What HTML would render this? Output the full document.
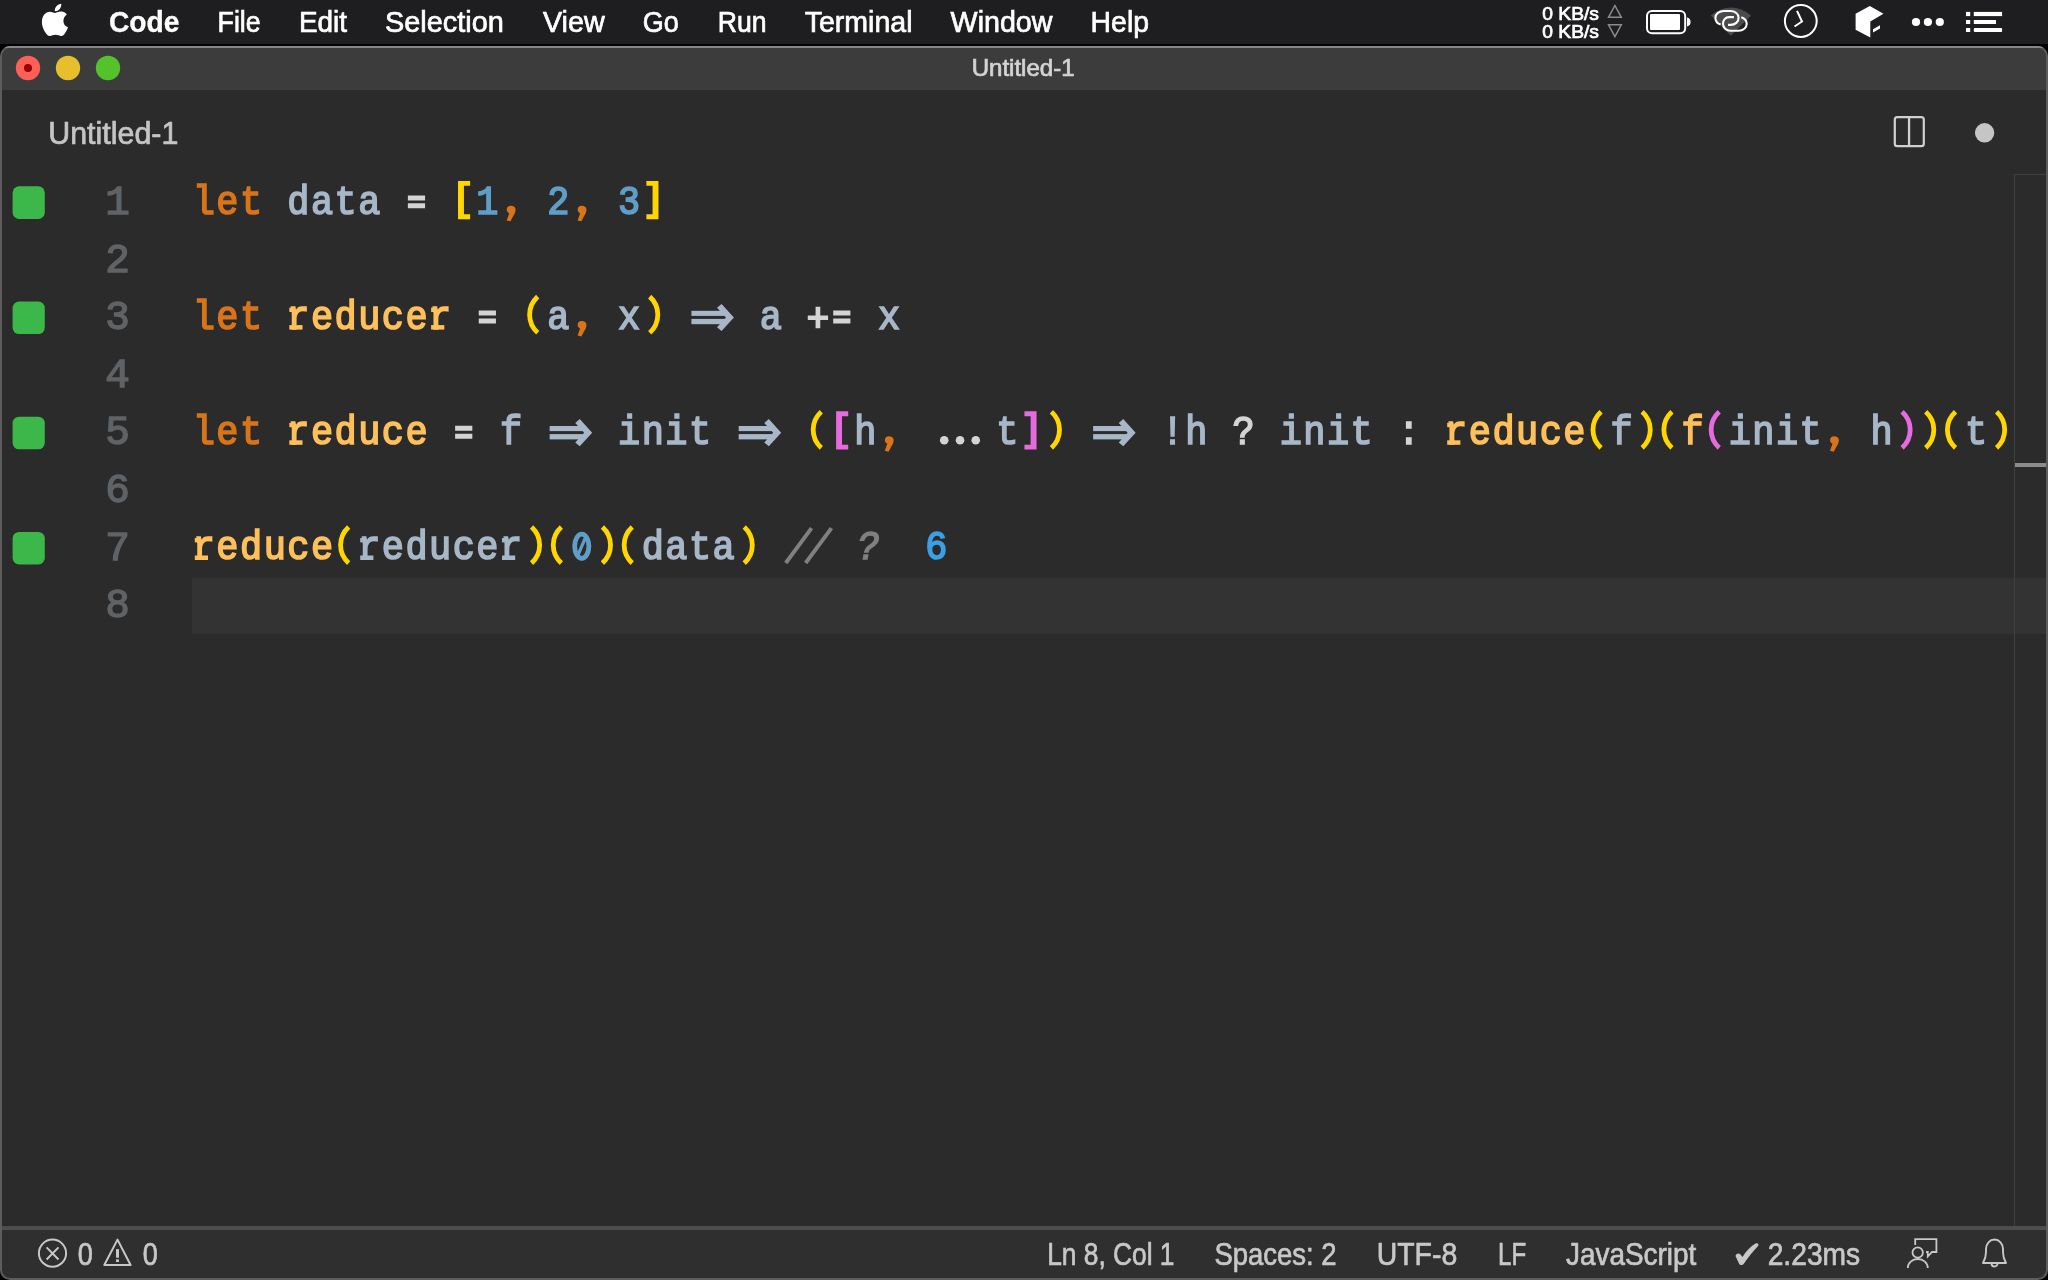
<!DOCTYPE html>
<html><head><meta charset="utf-8"><title>Untitled-1</title>
<style>
html,body{margin:0;padding:0;background:#000;width:2048px;height:1280px;overflow:hidden}
svg{display:block;position:absolute;left:0;top:0;will-change:transform}
.ui{font-family:"Liberation Sans",sans-serif}
.code text{font-family:"Liberation Mono",monospace;font-size:41.0px;stroke-width:1.7px}
.ln text{font-family:"Liberation Mono",monospace;font-size:41.0px;stroke:#606366;stroke-width:1.4px}
</style></head><body>
<svg width="2048" height="1280" viewBox="0 0 2048 1280">
<defs><symbol id="arrow" overflow="visible"><g fill="#a7b7c8">
<rect x="3.2" y="20.8" width="33.5" height="5.1"/>
<rect x="3.2" y="28.9" width="33.5" height="5.3"/>
<polygon points="33.3,13.9 45.7,27.5 33.3,41.1 28.8,37.3 37.7,27.5 28.8,17.7"/>
</g></symbol>
<symbol id="lp" overflow="visible"><path d="M14.9 6.6 C9.5 11.5 6.8 17.5 6.8 24.65 C6.8 31.8 9.5 37.8 14.9 42.7" fill="none" stroke-width="4.8"/></symbol>
<symbol id="rp" overflow="visible"><path d="M8.73 6.6 C14.13 11.5 16.83 17.5 16.83 24.65 C16.83 31.8 14.13 37.8 8.73 42.7" fill="none" stroke-width="4.8"/></symbol>
<symbol id="lb" overflow="visible"><path d="M6.1 6.1 H18.2 V11 H12 V39.5 H18.2 V44.4 H6.1 Z" stroke="none"/></symbol>
<symbol id="rb" overflow="visible"><path d="M17.5 6.1 H5.4 V11 H11.6 V39.5 H5.4 V44.4 H17.5 Z" stroke="none"/></symbol>
<symbol id="eq" overflow="visible"><path d="M3.2 20.6 H20.4 V25.6 H3.2 Z M3.2 28.5 H20.4 V33.5 H3.2 Z" stroke="none"/></symbol>
<symbol id="plus" overflow="visible"><path d="M1.4 25.4 H21.7 V30 H1.4 Z M9.2 16.8 H13.9 V38.3 H9.2 Z" stroke="none"/></symbol>
<symbol id="zero" overflow="visible"><ellipse cx="11.7" cy="25.8" rx="7.1" ry="12.1" fill="none" stroke-width="4.8"/><path d="M8.2 34 L15.2 17.6" fill="none" stroke-width="3.2"/></symbol>
<symbol id="comma" overflow="visible"><path d="M11.5 31 C14.5 31 16.4 32.6 16.4 35 C16.4 37 15.6 38.8 14.2 41 L11.3 46.5 L7.5 45.6 L10 38.6 C8.4 37.8 7.6 36.6 7.6 34.8 C7.6 32.6 9.2 31 11.5 31 Z" stroke="none"/></symbol>

<clipPath id="win"><rect x="0" y="46" width="2048" height="1234" rx="10"/></clipPath>
<clipPath id="inner"><rect x="2" y="48" width="2044" height="1230" rx="8"/></clipPath>
</defs>
<rect x="0" y="0" width="2048" height="1280" fill="#000"/>
<rect x="0" y="0" width="2048" height="44" fill="#1e1e20"/>
<g clip-path="url(#win)">
<rect x="0" y="46" width="2048" height="1234" fill="#5d5d5d"/>
<rect x="0" y="46" width="2048" height="2" fill="#858585"/>
<g clip-path="url(#inner)">
<rect x="2" y="48" width="2044" height="42" fill="#3c3c3c"/>
<rect x="2" y="90" width="2044" height="1136" fill="#2b2b2b"/>
<rect x="2" y="1226" width="2044" height="4" fill="#4d4d4d"/>
<rect x="2" y="1230" width="2044" height="48" fill="#2f2f2f"/>
</g></g>
<path d="M0 56 Q0 46 10 46" fill="none" stroke="#8a8a8a" stroke-width="0"/>
<rect x="192" y="578" width="1854" height="56" fill="#333333"/>
<rect x="2014" y="174" width="1" height="1052" fill="#404040"/>
<rect x="2014" y="174" width="32" height="1" fill="#404040"/>
<rect x="2015" y="463" width="31" height="4" fill="#8c8c8c"/>
<g class="ui">
<text x="108.90" y="32.00" font-size="29" fill="#ffffff" stroke="#ffffff" stroke-width="0.3" font-weight="bold" textLength="70.50" lengthAdjust="spacingAndGlyphs">Code</text>
<text x="217.60" y="32.00" font-size="29" fill="#ffffff" stroke="#ffffff" stroke-width="0.7" textLength="43.10" lengthAdjust="spacingAndGlyphs">File</text>
<text x="298.90" y="32.00" font-size="29" fill="#ffffff" stroke="#ffffff" stroke-width="0.7" textLength="48.10" lengthAdjust="spacingAndGlyphs">Edit</text>
<text x="385.00" y="32.00" font-size="29" fill="#ffffff" stroke="#ffffff" stroke-width="0.7" textLength="118.75" lengthAdjust="spacingAndGlyphs">Selection</text>
<text x="543.00" y="32.00" font-size="29" fill="#ffffff" stroke="#ffffff" stroke-width="0.7" textLength="61.70" lengthAdjust="spacingAndGlyphs">View</text>
<text x="642.80" y="32.00" font-size="29" fill="#ffffff" stroke="#ffffff" stroke-width="0.7" textLength="35.95" lengthAdjust="spacingAndGlyphs">Go</text>
<text x="717.80" y="32.00" font-size="29" fill="#ffffff" stroke="#ffffff" stroke-width="0.7" textLength="48.80" lengthAdjust="spacingAndGlyphs">Run</text>
<text x="804.70" y="32.00" font-size="29" fill="#ffffff" stroke="#ffffff" stroke-width="0.7" textLength="107.80" lengthAdjust="spacingAndGlyphs">Terminal</text>
<text x="950.60" y="32.00" font-size="29" fill="#ffffff" stroke="#ffffff" stroke-width="0.7" textLength="101.90" lengthAdjust="spacingAndGlyphs">Window</text>
<text x="1090.60" y="32.00" font-size="29" fill="#ffffff" stroke="#ffffff" stroke-width="0.7" textLength="58.40" lengthAdjust="spacingAndGlyphs">Help</text>
<text x="1542.30" y="19.80" font-size="17.8" fill="#ffffff" stroke="#ffffff" stroke-width="0.7" textLength="56.70" lengthAdjust="spacingAndGlyphs">0 KB/s</text>
<text x="1542.30" y="38.20" font-size="17.8" fill="#ffffff" stroke="#ffffff" stroke-width="0.7" textLength="56.70" lengthAdjust="spacingAndGlyphs">0 KB/s</text>
<text x="971.70" y="76.00" font-size="24" fill="#d4d4d4" stroke="#d4d4d4" stroke-width="0.7" textLength="102.90" lengthAdjust="spacingAndGlyphs">Untitled-1</text>
<text x="48.30" y="144.00" font-size="31" fill="#c5c5c5" stroke="#c5c5c5" stroke-width="0.7" textLength="130.00" lengthAdjust="spacingAndGlyphs">Untitled-1</text>
<text x="77.80" y="1264.50" font-size="31.5" fill="#c8c8c8" stroke="#c8c8c8" stroke-width="0.7" textLength="15.10" lengthAdjust="spacingAndGlyphs">0</text>
<text x="142.80" y="1264.50" font-size="31.5" fill="#c8c8c8" stroke="#c8c8c8" stroke-width="0.7" textLength="15.00" lengthAdjust="spacingAndGlyphs">0</text>
<text x="1047.20" y="1264.50" font-size="31.5" fill="#c8c8c8" stroke="#c8c8c8" stroke-width="0.7" textLength="127.30" lengthAdjust="spacingAndGlyphs">Ln 8, Col 1</text>
<text x="1214.40" y="1264.50" font-size="31.5" fill="#c8c8c8" stroke="#c8c8c8" stroke-width="0.7" textLength="122.20" lengthAdjust="spacingAndGlyphs">Spaces: 2</text>
<text x="1376.70" y="1264.50" font-size="31.5" fill="#c8c8c8" stroke="#c8c8c8" stroke-width="0.7" textLength="80.50" lengthAdjust="spacingAndGlyphs">UTF-8</text>
<text x="1498.00" y="1264.50" font-size="31.5" fill="#c8c8c8" stroke="#c8c8c8" stroke-width="0.7" textLength="28.10" lengthAdjust="spacingAndGlyphs">LF</text>
<text x="1566.00" y="1264.50" font-size="31.5" fill="#c8c8c8" stroke="#c8c8c8" stroke-width="0.7" textLength="130.30" lengthAdjust="spacingAndGlyphs">JavaScript</text>
<text x="1767.70" y="1264.50" font-size="31.5" fill="#c8c8c8" stroke="#c8c8c8" stroke-width="0.7" textLength="92.50" lengthAdjust="spacingAndGlyphs">2.23ms</text>
</g>

<!-- traffic lights -->
<circle cx="28" cy="68" r="12.2" fill="#fe5f57"/>
<circle cx="28" cy="68" r="4" fill="#990000"/>
<circle cx="68" cy="68" r="12.2" fill="#e7bf2c"/>
<circle cx="108" cy="68" r="12.2" fill="#53c22b"/>
<!-- apple -->
<path fill="#fff" d="M55.4 13 C57.5 12.2 59.5 11.6 61.5 11.6 C63.6 11.6 65.5 12.8 66.8 14.6 C64.7 15.9 63.4 18.2 63.4 21.1 C63.4 24.1 65.1 26.4 68 27.3 C67.3 29.5 66.1 31.8 64.8 33.5 C63.9 34.8 62.8 35.8 61.4 35.9 C59.6 36 58.3 34.8 55.6 34.8 C52.9 34.8 51.6 36 49.8 36 C48.1 36 46.9 34.6 45.9 33.2 C43.4 29.8 41.9 25.8 41.9 21.9 C41.9 15.9 45.5 11.7 49.9 11.7 C52.1 11.7 53.8 13 55.4 13 Z M61.3 3.8 C61.5 5.9 60.7 7.8 59.5 9.2 C58.3 10.5 56.6 11.3 54.8 11.1 C54.6 9.1 55.5 7.2 56.7 5.9 C57.9 4.7 59.7 3.9 61.3 3.8 Z"/>
<!-- net triangles -->
<polygon points="1614.9,5.5 1621.3,17.3 1608.5,17.3" fill="none" stroke="#8a8a8a" stroke-width="1.5"/>
<polygon points="1608.5,24.8 1621.3,24.8 1614.9,36.6" fill="none" stroke="#8a8a8a" stroke-width="1.5"/>
<!-- battery -->
<rect x="1647" y="11.1" width="38.2" height="22.2" rx="5" fill="none" stroke="#fff" stroke-width="2"/>
<rect x="1650" y="14" width="30" height="15.9" rx="1" fill="#fff"/>
<path d="M1687 17.6 a4.5 4.5 0 0 1 0 8.8z" fill="#fff"/>
<!-- fan shape + links -->
<path d="M1710.75 15.4 Q1731 -0.5 1751.1 15.4 L1730.9 35.8z" fill="#4b4b4b"/>
<path d="M1720.6 24.6 C1717.3 23.3 1715.4 20.8 1715.4 17.9 C1715.4 13.9 1719.3 11 1724 11 H1730.5 C1735.3 11 1738.6 14 1738.6 17.9 C1738.6 21.8 1735.3 24.9 1730.5 24.9 H1728" fill="none" stroke="#fff" stroke-width="2.1"/>
<path d="M1733.9 17.1 H1729 C1725.3 17.1 1723 20.2 1723 23.7 C1723 27.6 1726.2 30.8 1730.5 30.8 H1738.5 C1743.2 30.8 1746.7 27.7 1746.7 23.8 C1746.7 20.9 1744.6 18.3 1741.3 17.2" fill="none" stroke="#fff" stroke-width="2.1"/>
<!-- clock -->
<circle cx="1800.8" cy="21" r="15.9" fill="none" stroke="#fff" stroke-width="2"/>
<polyline points="1797,10.8 1802,21.5 1794.5,26.5" fill="none" stroke="#fff" stroke-width="2"/>
<!-- cube -->
<polygon points="1869.8,5.9 1883.5,13.7 1870.3,21.5 1870.3,37.6 1855.6,29.8 1855.6,13.7" fill="#fff"/>
<polygon points="1873,29.3 1880,25.3 1880,28.5 1873,32.5" fill="#fff"/>
<!-- dots -->
<circle cx="1916" cy="22" r="4.1" fill="#fff"/>
<circle cx="1927.9" cy="22" r="4.1" fill="#fff"/>
<circle cx="1939.8" cy="22" r="4.1" fill="#fff"/>
<!-- list -->
<rect x="1966" y="11.9" width="4.2" height="4.2" fill="#fff"/>
<rect x="1966" y="20" width="4.2" height="4" fill="#fff"/>
<rect x="1966" y="28" width="4.2" height="4" fill="#fff"/>
<rect x="1973.8" y="11.9" width="28.3" height="4.2" fill="#fff"/>
<rect x="1973.8" y="20" width="22.2" height="4" fill="#fff"/>
<rect x="1973.8" y="28" width="28.3" height="4" rx="1" fill="#fff"/>
<!-- split editor -->
<rect x="1894.8" y="117.2" width="29" height="29" rx="2.5" fill="none" stroke="#d0d0d0" stroke-width="2.2"/>
<rect x="1907.9" y="117" width="2.3" height="29.4" fill="#d0d0d0"/>
<circle cx="1984.6" cy="132.8" r="9.7" fill="#c5c5c5"/>
<!-- status: error -->
<circle cx="52.5" cy="1253.2" r="13.6" fill="none" stroke="#c8c8c8" stroke-width="2"/>
<path d="M46.6 1247.4 L58.5 1259.5 M58.5 1247.4 L46.6 1259.5" stroke="#c8c8c8" stroke-width="2"/>
<!-- warning -->
<path d="M117.5 1239.6 L130.6 1265 L104.3 1265 Z" fill="none" stroke="#c8c8c8" stroke-width="2" stroke-linejoin="round"/>
<rect x="116" y="1249.1" width="3" height="8.6" fill="#c8c8c8"/>
<rect x="116" y="1259.4" width="3" height="2.6" fill="#c8c8c8"/>
<!-- check -->
<path d="M1735.5 1256 C1736 1253.5 1738.5 1252.5 1740.5 1254.5 L1742.5 1257 C1746 1251 1750.5 1246.5 1755.5 1243.5 C1757.5 1242.5 1759.5 1244 1758 1246 C1753 1251.5 1748 1257.5 1744 1263.5 C1742.5 1265.5 1740 1265.5 1739 1263.5 Z" fill="#c8c8c8"/>
<!-- feedback -->
<circle cx="1917.7" cy="1252.5" r="5.2" fill="none" stroke="#c8c8c8" stroke-width="1.8"/>
<path d="M1907.8 1268 a10 9 0 0 1 20 0" fill="none" stroke="#c8c8c8" stroke-width="1.8"/>
<path d="M1915.2 1245 V1239.2 H1936.4 V1252 H1932 L1927.8 1256.5 V1252 H1926" fill="none" stroke="#c8c8c8" stroke-width="1.8"/>
<!-- bell -->
<path d="M1983 1263 q3-5 3-11 v-3 a8.5 9.5 0 0 1 17 0 v3 q0 6 3 11 z" fill="none" stroke="#c8c8c8" stroke-width="1.9" stroke-linejoin="round"/>
<path d="M1991.5 1263.5 a3 3 0 0 0 6 0" fill="none" stroke="#c8c8c8" stroke-width="1.9"/>

<g class="ln">
<text x="105.30" y="214.00" fill="#606366">1</text>
<text x="105.30" y="271.60" fill="#606366">2</text>
<text x="105.30" y="329.20" fill="#606366">3</text>
<text x="105.30" y="386.80" fill="#606366">4</text>
<text x="105.30" y="444.40" fill="#606366">5</text>
<text x="105.30" y="502.00" fill="#606366">6</text>
<text x="105.30" y="559.60" fill="#606366">7</text>
<text x="105.30" y="617.20" fill="#606366">8</text>
</g>
<rect x="12.6" y="186.30" width="32.2" height="32.6" rx="6.5" fill="#3cb84a"/>
<rect x="12.6" y="301.50" width="32.2" height="32.6" rx="6.5" fill="#3cb84a"/>
<rect x="12.6" y="416.70" width="32.2" height="32.6" rx="6.5" fill="#3cb84a"/>
<rect x="12.6" y="531.90" width="32.2" height="32.6" rx="6.5" fill="#3cb84a"/>
<g class="code">
<text x="214.16 240.41 266.67" y="213.60" fill="#d97418" stroke="#d97418" transform="scale(0.9 1)">let</text>
<text x="319.18 345.44 371.69 397.95" y="213.60" fill="#a7b7c8" stroke="#a7b7c8" transform="scale(0.9 1)">data</text>
<use href="#eq" x="404.67" y="174.80" fill="#d4d4d4" stroke="#d4d4d4"/>
<use href="#lb" x="451.93" y="174.80" fill="#ffd600" stroke="#ffd600"/>
<text x="529.23" y="213.60" fill="#5f9ec8" stroke="#5f9ec8" transform="scale(0.9 1)">1</text>
<use href="#comma" x="499.19" y="174.80" fill="#d97418" stroke="#d97418"/>
<text x="607.99" y="213.60" fill="#5f9ec8" stroke="#5f9ec8" transform="scale(0.9 1)">2</text>
<use href="#comma" x="570.08" y="174.80" fill="#d97418" stroke="#d97418"/>
<text x="686.76" y="213.60" fill="#5f9ec8" stroke="#5f9ec8" transform="scale(0.9 1)">3</text>
<use href="#rb" x="640.97" y="174.80" fill="#ffd600" stroke="#ffd600"/>
<text x="214.16 240.41 266.67" y="328.80" fill="#d97418" stroke="#d97418" transform="scale(0.9 1)">let</text>
<rect x="289.32" y="325.10" width="13.2" height="4.5" fill="#fec05b"/>
<rect x="289.32" y="307.60" width="5.5" height="4.4" fill="#fec05b"/>
<rect x="431.10" y="325.10" width="13.2" height="4.5" fill="#fec05b"/>
<rect x="431.10" y="307.60" width="5.5" height="4.4" fill="#fec05b"/>
<text x="319.18 345.44 371.69 397.95 424.20 450.46 476.71" y="328.80" fill="#fec05b" stroke="#fec05b" transform="scale(0.9 1)">reducer</text>
<use href="#eq" x="475.56" y="290.00" fill="#d4d4d4" stroke="#d4d4d4"/>
<use href="#lp" x="522.82" y="290.00" fill="#ffd600" stroke="#ffd600"/>
<text x="607.99" y="328.80" fill="#a7b7c8" stroke="#a7b7c8" transform="scale(0.9 1)">a</text>
<use href="#comma" x="570.08" y="290.00" fill="#d97418" stroke="#d97418"/>
<text x="686.76" y="328.80" fill="#a7b7c8" stroke="#a7b7c8" transform="scale(0.9 1)">x</text>
<use href="#rp" x="640.97" y="290.00" fill="#ffd600" stroke="#ffd600"/>
<use href="#arrow" x="688.23" y="290.00"/>
<text x="844.29" y="328.80" fill="#a7b7c8" stroke="#a7b7c8" transform="scale(0.9 1)">a</text>
<use href="#plus" x="806.38" y="290.00" fill="#d4d4d4" stroke="#d4d4d4"/>
<use href="#eq" x="830.01" y="290.00" fill="#d4d4d4" stroke="#d4d4d4"/>
<text x="975.57" y="328.80" fill="#a7b7c8" stroke="#a7b7c8" transform="scale(0.9 1)">x</text>
<text x="214.16 240.41 266.67" y="444.00" fill="#d97418" stroke="#d97418" transform="scale(0.9 1)">let</text>
<rect x="289.32" y="440.30" width="13.2" height="4.5" fill="#fec05b"/>
<rect x="289.32" y="422.80" width="5.5" height="4.4" fill="#fec05b"/>
<text x="319.18 345.44 371.69 397.95 424.20 450.46" y="444.00" fill="#fec05b" stroke="#fec05b" transform="scale(0.9 1)">reduce</text>
<use href="#eq" x="451.93" y="405.20" fill="#d4d4d4" stroke="#d4d4d4"/>
<text x="555.48" y="444.00" fill="#a7b7c8" stroke="#a7b7c8" transform="scale(0.9 1)">f</text>
<use href="#arrow" x="546.45" y="405.20"/>
<text x="686.76 713.01 739.27 765.53" y="444.00" fill="#a7b7c8" stroke="#a7b7c8" transform="scale(0.9 1)">init</text>
<use href="#arrow" x="735.49" y="405.20"/>
<use href="#lp" x="806.38" y="405.20" fill="#ffd600" stroke="#ffd600"/>
<use href="#lb" x="830.01" y="405.20" fill="#e66be0" stroke="#e66be0"/>
<text x="949.31" y="444.00" fill="#a7b7c8" stroke="#a7b7c8" transform="scale(0.9 1)">h</text>
<use href="#comma" x="877.27" y="405.20" fill="#d97418" stroke="#d97418"/>
<circle cx="944.23" cy="440.30" r="4.3" fill="#d4d4d4"/>
<circle cx="960.03" cy="440.30" r="4.3" fill="#d4d4d4"/>
<circle cx="975.73" cy="440.30" r="4.3" fill="#d4d4d4"/>
<text x="1106.85" y="444.00" fill="#a7b7c8" stroke="#a7b7c8" transform="scale(0.9 1)">t</text>
<use href="#rb" x="1019.05" y="405.20" fill="#e66be0" stroke="#e66be0"/>
<use href="#rp" x="1042.68" y="405.20" fill="#ffd600" stroke="#ffd600"/>
<use href="#arrow" x="1089.94" y="405.20"/>
<text x="1290.64" y="444.00" fill="#a7b7c8" stroke="#a7b7c8" transform="scale(0.9 1)">!</text>
<text x="1316.89" y="444.00" fill="#a7b7c8" stroke="#a7b7c8" transform="scale(0.9 1)">h</text>
<text x="1369.40" y="444.00" fill="#d4d4d4" stroke="#d4d4d4" transform="scale(0.9 1)">?</text>
<text x="1421.91 1448.17 1474.43 1500.68" y="444.00" fill="#a7b7c8" stroke="#a7b7c8" transform="scale(0.9 1)">init</text>
<text x="1553.19" y="444.00" fill="#d4d4d4" stroke="#d4d4d4" transform="scale(0.9 1)">:</text>
<rect x="1447.19" y="440.30" width="13.2" height="4.5" fill="#fec05b"/>
<rect x="1447.19" y="422.80" width="5.5" height="4.4" fill="#fec05b"/>
<text x="1605.70 1631.96 1658.21 1684.47 1710.73 1736.98" y="444.00" fill="#fec05b" stroke="#fec05b" transform="scale(0.9 1)">reduce</text>
<use href="#lp" x="1586.17" y="405.20" fill="#ffd600" stroke="#ffd600"/>
<text x="1789.49" y="444.00" fill="#a7b7c8" stroke="#a7b7c8" transform="scale(0.9 1)">f</text>
<use href="#rp" x="1633.43" y="405.20" fill="#ffd600" stroke="#ffd600"/>
<use href="#lp" x="1657.06" y="405.20" fill="#ffd600" stroke="#ffd600"/>
<text x="1868.26" y="444.00" fill="#fec05b" stroke="#fec05b" transform="scale(0.9 1)">f</text>
<use href="#lp" x="1704.32" y="405.20" fill="#e66be0" stroke="#e66be0"/>
<text x="1920.77 1947.03 1973.28 1999.54" y="444.00" fill="#a7b7c8" stroke="#a7b7c8" transform="scale(0.9 1)">init</text>
<use href="#comma" x="1822.47" y="405.20" fill="#d97418" stroke="#d97418"/>
<text x="2078.30" y="444.00" fill="#a7b7c8" stroke="#a7b7c8" transform="scale(0.9 1)">h</text>
<use href="#rp" x="1893.36" y="405.20" fill="#e66be0" stroke="#e66be0"/>
<use href="#rp" x="1916.99" y="405.20" fill="#ffd600" stroke="#ffd600"/>
<use href="#lp" x="1940.62" y="405.20" fill="#ffd600" stroke="#ffd600"/>
<text x="2183.33" y="444.00" fill="#a7b7c8" stroke="#a7b7c8" transform="scale(0.9 1)">t</text>
<use href="#rp" x="1987.88" y="405.20" fill="#ffd600" stroke="#ffd600"/>
<rect x="194.80" y="555.50" width="13.2" height="4.5" fill="#fec05b"/>
<rect x="194.80" y="538.00" width="5.5" height="4.4" fill="#fec05b"/>
<text x="214.16 240.41 266.67 292.93 319.18 345.44" y="559.20" fill="#fec05b" stroke="#fec05b" transform="scale(0.9 1)">reduce</text>
<use href="#lp" x="333.78" y="520.40" fill="#ffd600" stroke="#ffd600"/>
<rect x="360.21" y="555.50" width="13.2" height="4.5" fill="#a7b7c8"/>
<rect x="360.21" y="538.00" width="5.5" height="4.4" fill="#a7b7c8"/>
<rect x="501.99" y="555.50" width="13.2" height="4.5" fill="#a7b7c8"/>
<rect x="501.99" y="538.00" width="5.5" height="4.4" fill="#a7b7c8"/>
<text x="397.95 424.20 450.46 476.71 502.97 529.23 555.48" y="559.20" fill="#a7b7c8" stroke="#a7b7c8" transform="scale(0.9 1)">reducer</text>
<use href="#rp" x="522.82" y="520.40" fill="#ffd600" stroke="#ffd600"/>
<use href="#lp" x="546.45" y="520.40" fill="#ffd600" stroke="#ffd600"/>
<use href="#zero" x="570.08" y="520.40" fill="#5f9ec8" stroke="#5f9ec8"/>
<use href="#rp" x="593.71" y="520.40" fill="#ffd600" stroke="#ffd600"/>
<use href="#lp" x="617.34" y="520.40" fill="#ffd600" stroke="#ffd600"/>
<text x="713.01 739.27 765.53 791.78" y="559.20" fill="#a7b7c8" stroke="#a7b7c8" transform="scale(0.9 1)">data</text>
<use href="#rp" x="735.49" y="520.40" fill="#ffd600" stroke="#ffd600"/>
<line x1="785.75" y1="563.00" x2="811.55" y2="528.20" stroke="#808080" stroke-width="3.9"/>
<line x1="805.65" y1="563.00" x2="831.45" y2="528.20" stroke="#808080" stroke-width="3.9"/>
<text x="949.31" y="559.20" fill="#808080" stroke="#808080" transform="scale(0.9 1)" font-style="italic" stroke-width="0.6" dx="3.3">?</text>
<text x="1028.08" y="559.20" fill="#3d9fe3" stroke="#3d9fe3" stroke-width="1.7" transform="scale(0.9 1)">6</text>
</g>
</svg>
</body></html>
